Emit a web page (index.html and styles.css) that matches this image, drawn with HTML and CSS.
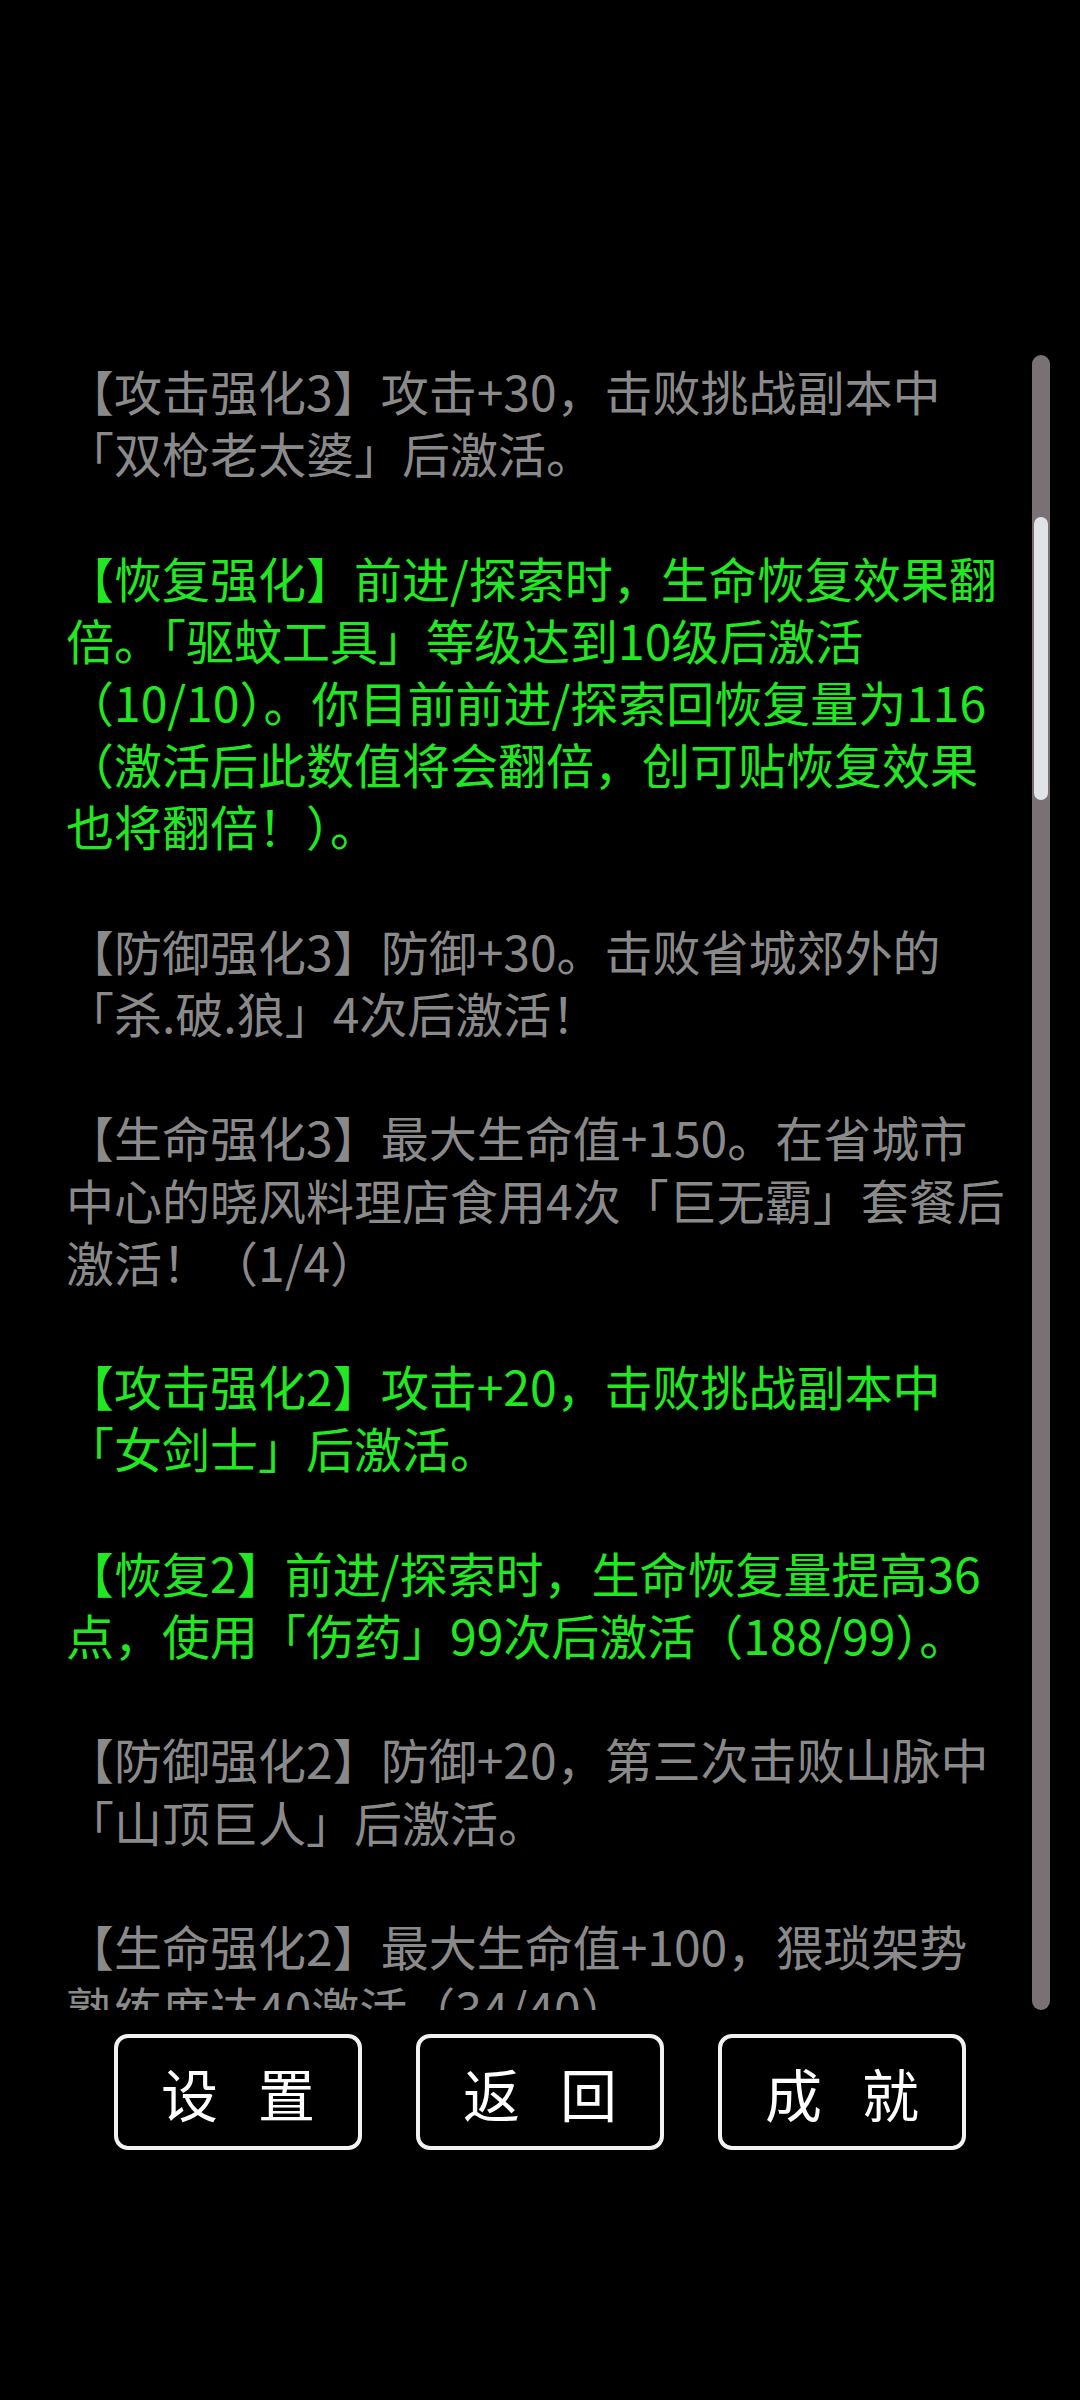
FILE: index.html
```html
<!DOCTYPE html>
<html lang="zh-CN">
<head>
<meta charset="utf-8">
<title>成就</title>
<link rel="stylesheet" href="styles.css">
</head>
<body>
<div class="screen">
  <div class="panel">
    <div class="log">
      <p class="entry gray">【攻击强化3】攻击+30，击败挑战副本中「双枪老太婆」后激活。</p>
      <p class="entry green">【恢复强化】前进/探索时，生命恢复效果翻倍。「驱蚊工具」等级达到10级后激活（10/10）。你目前前进/探索回恢复量为116（激活后此数值将会翻倍，创可贴恢复效果也将翻倍！）。</p>
      <p class="entry gray">【防御强化3】防御+30。击败省城郊外的「杀.破.狼」4次后激活！</p>
      <p class="entry gray">【生命强化3】最大生命值+150。在省城市中心的晓风料理店食用4次「巨无霸」套餐后激活！（1/4）</p>
      <p class="entry green">【攻击强化2】攻击+20，击败挑战副本中「女剑士」后激活。</p>
      <p class="entry green">【恢复2】前进/探索时，生命恢复量提高36点，使用「伤药」99次后激活（188/99）。</p>
      <p class="entry gray">【防御强化2】防御+20，第三次击败山脉中「山顶巨人」后激活。</p>
      <p class="entry gray">【生命强化2】最大生命值+100，猥琐架势熟练度达40激活（34/40）</p>
    </div>
    <div class="track"><div class="thumb"></div></div>
  </div>
  <div class="buttons">
    <button class="btn">设置</button>
    <button class="btn">返回</button>
    <button class="btn">成就</button>
  </div>
</div>
</body>
</html>
```

FILE: styles.css
```css
html, body {
  margin: 0;
  padding: 0;
  background: #000;
}

body {
  width: 1080px;
  height: 2400px;
  overflow: hidden;
  font-family: "Noto Sans CJK SC", "Noto Sans", sans-serif;
}

.screen {
  padding-top: 355px;
}

.panel {
  display: flex;
  height: 1655px;
}

.log {
  flex: 1;
  overflow: hidden;
  padding: 4px 21px 0 66px;
  font-size: 48px;
  line-height: 62.2px;
}

.entry {
  margin: 0 0 62.2px 0;
}

.gray {
  color: #8a8a8a;
}

.green {
  color: #22e822;
}

.track {
  width: 18px;
  margin-right: 30px;
  background: #7a7175;
  border-radius: 9px;
  padding: 0 2px;
  box-sizing: border-box;
}

.thumb {
  margin-top: 162px;
  height: 283px;
  background: #e0e4e6;
  border-radius: 7px;
}

.buttons {
  display: flex;
  justify-content: center;
  gap: 54px;
  margin-top: 24px;
}

.btn {
  width: 248px;
  height: 116px;
  background: #000;
  border: 4px solid #f2f2f2;
  border-radius: 14px;
  color: #fff;
  font-family: "Noto Sans CJK SC", "Noto Sans", sans-serif;
  font-size: 57px;
  letter-spacing: 40px;
  padding: 0 0 0 40px;
  line-height: 1;
  box-sizing: border-box;
}
```
